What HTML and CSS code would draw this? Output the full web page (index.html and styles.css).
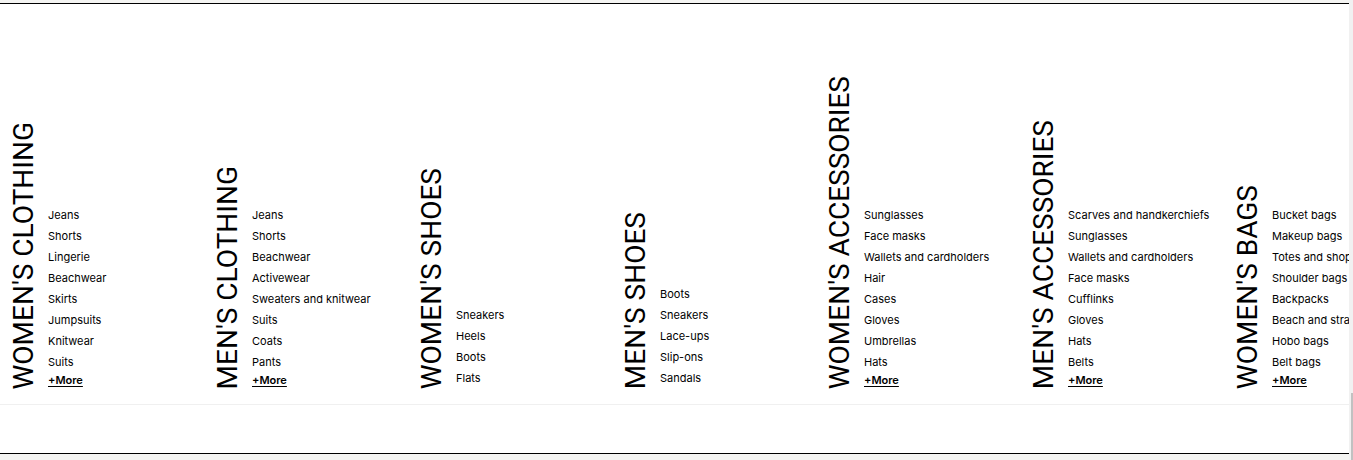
FILE: index.html
```html
<!DOCTYPE html>
<html lang="en">
<head>
<meta charset="utf-8">
<meta name="viewport" content="width=device-width, initial-scale=1">
<title>Shop categories</title>
<link rel="stylesheet" href="styles.css">
</head>
<body>
<div class="page">
  <main class="content">
    <nav class="categories" aria-label="Categories">
      <section class="category">
        <h2 class="category-title">WOMEN'S CLOTHING</h2>
        <ul class="links">
          <li><a href="#">Jeans</a></li>
          <li><a href="#">Shorts</a></li>
          <li><a href="#">Lingerie</a></li>
          <li><a href="#">Beachwear</a></li>
          <li><a href="#">Skirts</a></li>
          <li><a href="#">Jumpsuits</a></li>
          <li><a href="#">Knitwear</a></li>
          <li><a href="#">Suits</a></li>
          <li class="more"><a href="#">+More</a></li>
        </ul>
      </section>
      <section class="category">
        <h2 class="category-title">MEN'S CLOTHING</h2>
        <ul class="links">
          <li><a href="#">Jeans</a></li>
          <li><a href="#">Shorts</a></li>
          <li><a href="#">Beachwear</a></li>
          <li><a href="#">Activewear</a></li>
          <li><a href="#">Sweaters and knitwear</a></li>
          <li><a href="#">Suits</a></li>
          <li><a href="#">Coats</a></li>
          <li><a href="#">Pants</a></li>
          <li class="more"><a href="#">+More</a></li>
        </ul>
      </section>
      <section class="category">
        <h2 class="category-title">WOMEN'S SHOES</h2>
        <ul class="links">
          <li><a href="#">Sneakers</a></li>
          <li><a href="#">Heels</a></li>
          <li><a href="#">Boots</a></li>
          <li><a href="#">Flats</a></li>
        </ul>
      </section>
      <section class="category">
        <h2 class="category-title">MEN'S SHOES</h2>
        <ul class="links">
          <li><a href="#">Boots</a></li>
          <li><a href="#">Sneakers</a></li>
          <li><a href="#">Lace-ups</a></li>
          <li><a href="#">Slip-ons</a></li>
          <li><a href="#">Sandals</a></li>
        </ul>
      </section>
      <section class="category">
        <h2 class="category-title">WOMEN'S ACCESSORIES</h2>
        <ul class="links">
          <li><a href="#">Sunglasses</a></li>
          <li><a href="#">Face masks</a></li>
          <li><a href="#">Wallets and cardholders</a></li>
          <li><a href="#">Hair</a></li>
          <li><a href="#">Cases</a></li>
          <li><a href="#">Gloves</a></li>
          <li><a href="#">Umbrellas</a></li>
          <li><a href="#">Hats</a></li>
          <li class="more"><a href="#">+More</a></li>
        </ul>
      </section>
      <section class="category">
        <h2 class="category-title">MEN'S ACCESSORIES</h2>
        <ul class="links">
          <li><a href="#">Scarves and handkerchiefs</a></li>
          <li><a href="#">Sunglasses</a></li>
          <li><a href="#">Wallets and cardholders</a></li>
          <li><a href="#">Face masks</a></li>
          <li><a href="#">Cufflinks</a></li>
          <li><a href="#">Gloves</a></li>
          <li><a href="#">Hats</a></li>
          <li><a href="#">Belts</a></li>
          <li class="more"><a href="#">+More</a></li>
        </ul>
      </section>
      <section class="category">
        <h2 class="category-title">WOMEN'S BAGS</h2>
        <ul class="links">
          <li><a href="#">Bucket bags</a></li>
          <li><a href="#">Makeup bags</a></li>
          <li><a href="#">Totes and shopping bags</a></li>
          <li><a href="#">Shoulder bags</a></li>
          <li><a href="#">Backpacks</a></li>
          <li><a href="#">Beach and straw bags</a></li>
          <li><a href="#">Hobo bags</a></li>
          <li><a href="#">Belt bags</a></li>
          <li class="more"><a href="#">+More</a></li>
        </ul>
      </section>
    </nav>
  </main>
  <div class="scroll-track"><div class="scroll-thumb"></div></div>
</div>
</body>
</html>
```
FILE: styles.css
```css
* {
  box-sizing: border-box;
}

body {
  margin: 0;
  background: #f4f4f2;
  color: #000;
  font-family: Inter, "Liberation Sans", sans-serif;
  overflow: hidden;
}

.page {
  display: flex;
  min-height: 100vh;
}

.content {
  flex: 1;
  min-width: 0;
  padding-top: 3px;
}

.categories {
  display: flex;
  align-items: flex-end;
  overflow: hidden;
  padding: 72px 0 15px;
  background: #fff;
  border-top: 1px solid #000;
  border-bottom: 1px solid #f0f0f0;
}

.content::after {
  content: "";
  display: block;
  height: 48px;
  background: #fff;
  border-bottom: 1px solid #000;
}

.category {
  display: flex;
  flex: 0 0 204px;
  align-items: flex-end;
  gap: 8px;
  padding-left: 8px;
}

.category-title {
  margin: 0;
  font: 400 28px/32px Roboto, "Liberation Sans", sans-serif;
  white-space: nowrap;
  writing-mode: vertical-rl;
  transform: rotate(180deg);
}

.links {
  margin: 0;
  padding: 0;
  list-style: none;
  font-size: 11px;
  line-height: 21px;
  white-space: nowrap;
}

.links a {
  color: inherit;
  text-decoration: none;
}

.links .more {
  padding-bottom: 2px;
  line-height: 14px;
  font-weight: 600;
}

.links .more a {
  text-decoration: underline;
  text-underline-offset: 2px;
}

.scroll-track {
  display: flex;
  align-items: flex-end;
  flex: 0 0 4px;
  padding-left: 2px;
  background: #f1f1f1;
}

.scroll-thumb {
  flex: 1;
  height: 67px;
  background: #c1c1c1;
}
```
